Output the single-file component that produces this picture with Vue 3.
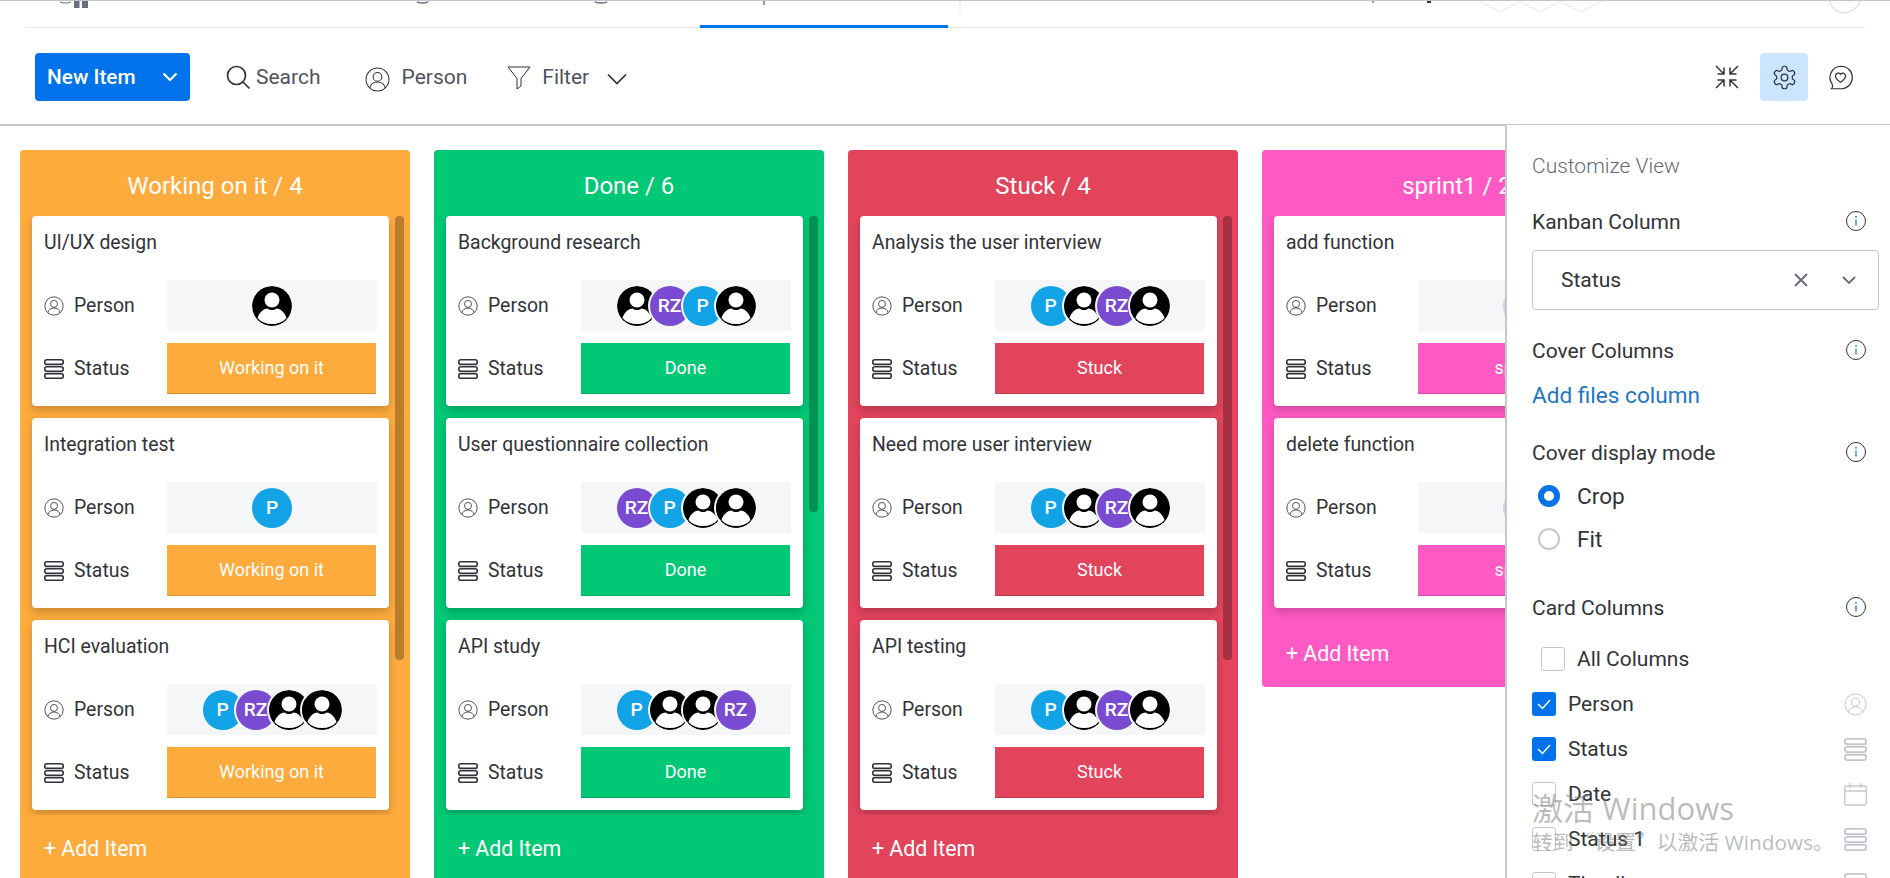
<template>
  <div class="app">
    <svg class="defs" width="0" height="0" aria-hidden="true">
      <symbol id="ic-person" viewBox="0 0 24 24">
        <circle cx="12" cy="12" r="11" fill="none" stroke="currentColor" stroke-width="1" />
        <circle cx="12" cy="9.500" r="4.200" fill="none" stroke="currentColor" stroke-width="1" />
        <path d="M4.600 20c1-3.600 3.600-5.600 7.400-5.600s6.400 2 7.400 5.600" fill="none" stroke="currentColor" stroke-width="1" />
      </symbol>
      <symbol id="ic-status" viewBox="0 0 20 20">
        <rect x="0.800" y="0.800" width="18.400" height="4.600" rx="2" fill="none" stroke="currentColor" stroke-width="1.600" />
        <rect x="0.800" y="7.700" width="18.400" height="4.600" rx="2" fill="none" stroke="currentColor" stroke-width="1.600" />
        <rect x="0.800" y="14.600" width="18.400" height="4.600" rx="2" fill="none" stroke="currentColor" stroke-width="1.600" />
      </symbol>
      <symbol id="ic-info" viewBox="0 0 20 20">
        <circle cx="10" cy="10" r="9.500" fill="none" stroke="#323338" stroke-width="1" />
        <path d="M10 8.600v6" stroke="#0073ea" stroke-width="1.200" />
        <circle cx="10" cy="5.800" r="0.900" fill="#0073ea" />
      </symbol>
      <symbol id="ic-user" viewBox="0 0 40 40">
        <circle cx="20" cy="20" r="20" fill="#000" />
        <circle cx="20" cy="14" r="7.500" fill="#fff" />
        <path d="M5.500 32c2-6.500 7-9.500 10-9.500 1.600 1 3 1.500 4.500 1.500s2.900-.5 4.500-1.500c3 0 8 3 10 9.500-3.500 4-8.500 6-14.500 6s-11-2-14.500-6z" fill="#fff" />
      </symbol>
    </svg>

    <header class="topbar">
      <svg class="topbar__cut" width="1890" height="24" viewBox="0 0 1890 24">
        <path d="M60 0.500c1 2 10 2 11 0" stroke="#676879" fill="none" stroke-width="1" />
        <path d="M74 0h5.500v7H74zM82 0h6v7h-6z" fill="#6b6d85" />
        <path d="M417 0.500c1 2 10 2 11 0" stroke="#676879" fill="none" stroke-width="1.500" />
        <path d="M595 0.500c1 2 11 2 12 0" stroke="#676879" fill="none" stroke-width="1.500" />
        <path d="M764 0v4M1373 0v2" stroke="#323338" stroke-width="1" />
        <path d="M1427 0h4v2h-4z" fill="#323338" />
        <path d="M960 0v12" stroke="#e6e9ef" stroke-width="1" />
        <path d="M1480 0l20 11 20-11 20 11 20-11 21 11 21-11" stroke="#efefef" fill="none" stroke-width="1.500" />
        <path d="M1830 0c1 7 8 12 14 12s14-5 16-12" stroke="#e4e4e4" fill="none" stroke-width="1.500" />
      </svg>
      <div class="topbar__tabs">
        <div class="topbar__active"></div>
      </div>
    </header>

    <div class="toolbar">
      <button class="new-btn">
        <span>New Item</span>
        <svg width="16" height="16" viewBox="0 0 16 16"><path d="M1.500 4.500l6.500 6.500 6.500-6.500" fill="none" stroke="#fff" stroke-width="2.200" /></svg>
      </button>
      <div class="tool tool--search">
        <svg width="25" height="25" viewBox="0 0 25 25">
          <circle cx="10.500" cy="10.500" r="9" fill="none" stroke="#323338" stroke-width="1.700" />
          <path d="M17 17l6.500 6.500" stroke="#323338" stroke-width="1.700" />
        </svg>
        <span>Search</span>
      </div>
      <div class="tool tool--person">
        <svg class="tool__person" width="25" height="25"><use href="#ic-person" /></svg>
        <span>Person</span>
      </div>
      <div class="tool tool--filter">
        <svg width="24" height="25" viewBox="0 0 24 25">
          <path d="M1 2h22l-9 11.500V21l-4 3V13.500z" fill="none" stroke="#323338" stroke-width="1" />
        </svg>
        <span>Filter</span>
        <svg class="tool__chev" width="20" height="20" viewBox="0 0 20 20"><path d="M1 5.500l9 9 9-9" fill="none" stroke="#323338" stroke-width="1.700" /></svg>
      </div>
      <div class="toolbar__right">
        <svg class="collapse" width="26" height="26" viewBox="0 0 26 26" fill="none" stroke="#323338" stroke-width="1.500">
          <path d="M2 2l8 8M10 3.500V10H3.500M24 2l-8 8M16 3.500V10h6.500M2 24l8-8M10 22.500V16H3.500M24 24l-8-8M16 22.500V16h6.500" />
        </svg>
        <div class="gear">
          <svg width="27" height="27" viewBox="0 0 24 24" fill="none" stroke="#323338" stroke-width="1.100">
            <path d="M12.220 2h-.44a2 2 0 0 0-2 2v.18a2 2 0 0 1-1 1.730l-.43.25a2 2 0 0 1-2 0l-.15-.08a2 2 0 0 0-2.730.73l-.22.38a2 2 0 0 0 .73 2.730l.15.1a2 2 0 0 1 1 1.720v.51a2 2 0 0 1-1 1.740l-.15.09a2 2 0 0 0-.73 2.730l.22.38a2 2 0 0 0 2.730.73l.15-.08a2 2 0 0 1 2 0l.43.25a2 2 0 0 1 1 1.730V20a2 2 0 0 0 2 2h.44a2 2 0 0 0 2-2v-.18a2 2 0 0 1 1-1.730l.43-.25a2 2 0 0 1 2 0l.15.08a2 2 0 0 0 2.730-.73l.22-.39a2 2 0 0 0-.73-2.730l-.15-.08a2 2 0 0 1-1-1.740v-.5a2 2 0 0 1 1-1.740l.15-.09a2 2 0 0 0 .73-2.730l-.22-.38a2 2 0 0 0-2.730-.73l-.15.08a2 2 0 0 1-2 0l-.43-.25a2 2 0 0 1-1-1.730V4a2 2 0 0 0-2-2z" />
            <circle cx="12" cy="12" r="3" />
          </svg>
        </div>
        <svg class="heart" width="27" height="27" viewBox="0 0 24 24" fill="none" stroke="#323338" stroke-width="1.100">
          <path d="M12.500 2a10 10 0 1 1 0 20H4c1-1.200 1.300-2.500.7-4A10 10 0 0 1 12.500 2z" />
          <path d="M12 16.300s-4.500-2.900-4.500-5.800a2.500 2.500 0 0 1 4.500-1.300 2.500 2.500 0 0 1 4.500 1.300c0 2.900-4.500 5.800-4.500 5.800z" />
        </svg>
      </div>
    </div>

    <main class="board">
      <section v-for="col in columns" :key="col.name" class="col" :class="`is-${col.tone}`">
        <h2 class="col__head">{{ col.name }} / {{ col.total }}</h2>
        <div class="col__list">
          <article v-for="item in col.items" :key="item.title" class="card">
            <div class="card__title">{{ item.title }}</div>
            <div class="card__row">
              <div class="card__label">
                <svg width="20" height="20"><use href="#ic-person" /></svg>
                <span>Person</span>
              </div>
              <div class="card__people">
                <template v-for="(who, i) in item.people" :key="i">
                  <svg v-if="who === 'u'" class="avatar" width="40" height="40"><use href="#ic-user" /></svg>
                  <span v-else-if="who === 'P'" class="avatar avatar--p">P</span>
                  <span v-else-if="who === 'RZ'" class="avatar avatar--rz">RZ</span>
                </template>
                <span v-if="!item.people.length" class="avatar-empty"></span>
              </div>
            </div>
            <div class="card__row">
              <div class="card__label">
                <svg width="20" height="20"><use href="#ic-status" /></svg>
                <span>Status</span>
              </div>
              <div class="card__status">{{ col.label }}</div>
            </div>
          </article>
          <div v-if="col.thumb" class="col__thumb" :style="{ height: col.thumb + 'px' }"></div>
        </div>
        <div class="col__add">+ Add Item</div>
      </section>
    </main>

    <aside class="panel">
      <div class="panel__title">Customize View</div>

      <div class="panel__head panel__head--kanban">
        <span>Kanban Column</span>
        <svg width="20" height="20"><use href="#ic-info" /></svg>
      </div>
      <div class="select">
        <span>Status</span>
        <svg class="select__x" width="14" height="14" viewBox="0 0 14 14"><path d="M1 1l12 12M13 1L1 13" stroke="#676879" stroke-width="1.800" /></svg>
        <svg class="select__chev" width="16" height="16" viewBox="0 0 16 16"><path d="M2 5l6 6 6-6" fill="none" stroke="#676879" stroke-width="1.800" /></svg>
      </div>

      <div class="panel__head panel__head--cover">
        <span>Cover Columns</span>
        <svg width="20" height="20"><use href="#ic-info" /></svg>
      </div>
      <a class="panel__link">Add files column</a>

      <div class="panel__head panel__head--mode">
        <span>Cover display mode</span>
        <svg width="20" height="20"><use href="#ic-info" /></svg>
      </div>
      <label class="radio"><i class="radio__dot radio__dot--on"></i>Crop</label>
      <label class="radio"><i class="radio__dot"></i>Fit</label>

      <div class="panel__head panel__head--cards">
        <span>Card Columns</span>
        <svg width="20" height="20"><use href="#ic-info" /></svg>
      </div>
      <div class="check check--all">
        <i class="check__box"></i>
        <span>All Columns</span>
      </div>
      <div v-for="row in cardColumns" :key="row.name" class="check">
        <i class="check__box" :class="{ 'check__box--on': row.on }">
          <svg v-if="row.on" width="24" height="24" viewBox="0 0 24 24"><path d="M6 12l4.500 4.500L18 8" fill="none" stroke="#fff" stroke-width="1.500" /></svg>
        </i>
        <span>{{ row.name }}</span>
        <svg v-if="row.icon === 'person'" class="check__icon" width="23" height="23"><use href="#ic-person" /></svg>
        <svg v-else-if="row.icon === 'date'" class="check__icon" width="23" height="23" viewBox="0 0 23 23" fill="none" stroke="currentColor" stroke-width="1.300">
          <rect x="0.700" y="3" width="21.600" height="19" rx="1.500" />
          <path d="M0.700 8h21.600M6 0v5M17 0v5" />
        </svg>
        <svg v-else class="check__icon" width="23" height="23"><use href="#ic-status" /></svg>
      </div>

      <div class="watermark">
        <div class="watermark__big">激活 Windows</div>
        <div class="watermark__small"><span class="watermark__cjk">转到“设置”以激活</span> Windows。</div>
      </div>
    </aside>
  </div>
</template>

<script setup>
const card = (title, people) => ({ title, people })

const columns = [
  {
    name: 'Working on it', label: 'Working on it', tone: 'working', total: 4, thumb: 444,
    items: [
      card('UI/UX design', ['u']),
      card('Integration test', ['P']),
      card('HCI evaluation', ['P', 'RZ', 'u', 'u']),
    ],
  },
  {
    name: 'Done', label: 'Done', tone: 'done', total: 6, thumb: 296,
    items: [
      card('Background research', ['u', 'RZ', 'P', 'u']),
      card('User questionnaire collection', ['RZ', 'P', 'u', 'u']),
      card('API study', ['P', 'u', 'u', 'RZ']),
    ],
  },
  {
    name: 'Stuck', label: 'Stuck', tone: 'stuck', total: 4, thumb: 444,
    items: [
      card('Analysis the user interview', ['P', 'u', 'RZ', 'u']),
      card('Need more user interview', ['P', 'u', 'RZ', 'u']),
      card('API testing', ['P', 'u', 'RZ', 'u']),
    ],
  },
  {
    name: 'sprint1', label: 'sprint1', tone: 'sprint', total: 2, thumb: 0,
    items: [
      card('add function', []),
      card('delete function', []),
    ],
  },
]

const cardColumns = [
  { name: 'Person', on: true, icon: 'person' },
  { name: 'Status', on: true, icon: 'status' },
  { name: 'Date', on: false, icon: 'date' },
  { name: 'Status 1', on: false, icon: 'status' },
  { name: 'Timeline', on: false, icon: 'status' },
]
</script>

<style>
html, body { margin: 0; background: #fff; overflow: hidden; }
</style>

<style scoped>
.app {
  position: relative;
  width: 1890px;
  height: 878px;
  overflow: hidden;
  display: flex;
  flex-direction: column;
  background: #fff;
  color: #323338;
  font-family: Roboto, "Noto Sans", sans-serif;
}
.defs { position: absolute; }

.topbar {
  position: relative;
  flex: 0 0 28px;
  box-sizing: border-box;
  border-top: 1px solid #c5c7d0;
}
.topbar__cut { position: absolute; left: 0; top: 0; }
.topbar__tabs {
  position: absolute;
  left: 26px;
  right: 25px;
  bottom: 0;
  height: 1px;
  background: #e6e9ef;
}
.topbar__active {
  position: absolute;
  left: 674px;
  bottom: 0;
  width: 248px;
  height: 3px;
  background: #0073ea;
}

.toolbar {
  flex: 0 0 98px;
  box-sizing: border-box;
  display: flex;
  align-items: flex-start;
  padding: 25px 0 0 35px;
  border-bottom: 2px solid #c5c7d0;
}
.new-btn {
  width: 155px;
  height: 48px;
  display: flex;
  align-items: center;
  justify-content: space-between;
  padding: 0 12px;
  border: 0;
  border-radius: 4px;
  background: #0073ea;
  color: #fff;
  font: 500 20.800px Roboto, sans-serif;
}
.tool {
  height: 48px;
  display: flex;
  align-items: center;
  font-size: 21px;
  color: #50525e;
}
.tool--search { margin-left: 36px; gap: 5px; }
.tool--person { margin-left: 44px; gap: 12px; }
.tool--filter { margin-left: 40px; gap: 11px; }
.tool__person { color: #323338; margin-top: 4px; }
.tool__chev { margin-left: 7px; margin-top: 4px; }
.toolbar__right {
  margin-left: auto;
  display: flex;
  align-items: center;
  height: 48px;
  padding-right: 36px;
}
.gear {
  width: 48px;
  height: 48px;
  margin: 0 19px 0 20px;
  display: flex;
  align-items: center;
  justify-content: center;
  border-radius: 4px;
  background: #cce5ff;
}

.board {
  flex: 1;
  display: flex;
  align-items: flex-start;
  gap: 24px;
  padding: 24px 0 0 20px;
}
.col {
  flex: 0 0 390px;
  border-radius: 4px;
}
.is-working { --tone: #fdab3d; }
.is-done { --tone: #00c875; }
.is-stuck { --tone: #e2445c; }
.is-sprint { --tone: #ff5ac4; }
.col { background: var(--tone); }
.col__head {
  margin: 0;
  height: 66px;
  padding-top: 23px;
  box-sizing: border-box;
  font-size: 24px;
  line-height: 26px;
  font-weight: 400;
  color: #fff;
  text-align: center;
}
.col__list {
  position: relative;
  max-height: 599px;
  overflow: hidden;
  padding-left: 12px;
}
.col__thumb {
  position: absolute;
  left: 375px;
  top: 0;
  width: 9px;
  border-radius: 4px;
  background: rgba(0, 0, 0, 0.27);
}
.col__add {
  height: 67px;
  padding-left: 24px;
  line-height: 68px;
  font-size: 21.300px;
  font-weight: 400;
  color: #fff;
}

.card {
  box-sizing: border-box;
  width: 357px;
  height: 190px;
  margin-bottom: 12px;
  padding: 12px 12px 0;
  border-radius: 4px;
  background: #fff;
  box-shadow: 0 4px 8px rgba(0, 0, 0, 0.2);
  font-size: 19.400px;
}
.is-sprint .card { width: 366px; }
.card__title {
  height: 40px;
  line-height: 29px;
  margin-bottom: 12px;
}
.card__row {
  display: flex;
  height: 51px;
  margin-bottom: 12px;
}
.card__label {
  flex: 0 0 123px;
  display: flex;
  align-items: center;
  gap: 10px;
}
.card__label span { margin-top: -1px; }
.is-sprint .card__label { flex-basis: 132px; }
.card__label svg { color: #323338; }
.card__people {
  flex: 1;
  display: flex;
  align-items: center;
  justify-content: center;
  background: #f5f6f8;
}
.avatar {
  box-sizing: border-box;
  width: 40px;
  height: 40px;
  flex: none;
  border-radius: 50%;
  margin-left: -7px;
  box-shadow: 0 0 0 2px #f5f6f8;
  display: flex;
  align-items: center;
  justify-content: center;
  color: #fff;
  font-weight: 500;
  font-size: 19.200px;
}
.avatar:first-child { margin-left: 0; }
.avatar--p { background: #11a3e6; }
.avatar--rz { background: #784bd1; }
.avatar-empty {
  width: 40px;
  height: 40px;
  border-radius: 50%;
  border: 2px solid #d0d3dc;
  box-sizing: border-box;
}
.card__status {
  flex: 1;
  margin-right: 1px;
  padding-bottom: 2px;
  display: flex;
  align-items: center;
  justify-content: center;
  background: var(--tone);
  color: #fff;
  font-size: 18px;
  font-weight: 400;
  box-shadow: inset 0 -1px 0 rgba(0, 0, 0, 0.15);
}

.panel {
  position: absolute;
  left: 1505px;
  top: 125px;
  right: 0;
  bottom: 0;
  padding-left: 25px;
  border-left: 2px solid #c5c7d0;
  background: #fff;
  font-size: 21px;
}
.panel__title {
  margin-top: 28px;
  line-height: 26px;
  font-weight: 300;
  color: #676879;
}
.panel__head {
  width: 336px;
  height: 26px;
  display: flex;
  align-items: center;
  justify-content: space-between;
  padding-right: 2px;
  box-sizing: border-box;
}
.panel__head span { margin-top: -1px; }
.panel__head svg { margin-top: -2px; }
.panel__head--kanban { margin-top: 30px; }
.panel__head--cover { margin-top: 28px; }
.panel__head--mode { margin-top: 31px; }
.panel__head--cards { margin-top: 43px; }
.panel__link {
  display: block;
  margin-top: 19px;
  line-height: 26px;
  font-size: 22.600px;
  color: #1f76c2;
}
.select {
  box-sizing: border-box;
  width: 347px;
  height: 60px;
  margin-top: 15px;
  display: flex;
  align-items: center;
  padding: 0 21px 0 28px;
  border: 1px solid #c5c7d0;
  border-radius: 4px;
}
.select span { flex: 1; }
.select__chev { margin-left: 33px; }
.radio {
  display: flex;
  align-items: center;
  height: 26px;
  margin-top: 17px;
  padding-left: 6px;
  font-size: 22.600px;
}
.radio__dot {
  box-sizing: border-box;
  width: 22px;
  height: 22px;
  margin-right: 17px;
  border-radius: 50%;
  border: 2px solid #c5c7d0;
}
.radio__dot--on { border: 6px solid #0073ea; }
.check {
  width: 336px;
  height: 26px;
  margin-top: 19px;
  display: flex;
  align-items: center;
}
.check--all { margin-top: 25px; padding-left: 9px; box-sizing: border-box; }
.check__box {
  box-sizing: border-box;
  flex: none;
  width: 24px;
  height: 24px;
  margin-right: 12px;
  border: 1px solid #c5c7d0;
  border-radius: 3px;
}
.check__box--on { border: 0; background: #0073ea; }
.check__box svg { display: block; }
.check__icon { margin-left: auto; color: #c5c7d0; margin-right: 1px; }

.watermark {
  position: absolute;
  left: 25px;
  top: 660px;
  color: rgba(120, 120, 120, 0.5);
  font-family: "Open Sans", "Noto Sans CJK SC", sans-serif;
  pointer-events: none;
}
.watermark__big { font-size: 31px; line-height: 46px; }
.watermark__small { font-size: 20.800px; line-height: 28px; margin-top: -4px; white-space: nowrap; }
.watermark__cjk { font-family: "Noto Sans CJK SC", sans-serif; }
</style>
